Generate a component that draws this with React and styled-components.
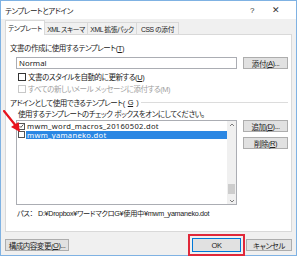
import styled, { createGlobalStyle } from "styled-components";

const GlobalStyle = createGlobalStyle`
  html, body {
    margin: 0;
    padding: 0;
    background: #ffffff;
  }
  * {
    box-sizing: border-box;
  }
`;

const Window = styled.div`
  width: 297px;
  height: 256px;
  border: 1px solid #7fb2e3;
  background: #f0f0f0;
  display: flex;
  flex-direction: column;
  position: relative;
  font-family: "Liberation Sans", "Noto Sans CJK JP", sans-serif;
  font-feature-settings: "palt";
  font-size: 7.5px;
  letter-spacing: -0.45px;
  color: #1a1a1a;
`;

// Latin runs in the list are set wider, like the list box font
const En = styled.span`
  font-family: "Noto Sans", sans-serif;
  font-size: ${(p) => p.size || 7.8}px;
  letter-spacing: ${(p) => p.spacing || 0}px;
`;

const TitleBar = styled.div`
  height: 18px;
  background: #ffffff;
  display: flex;
  align-items: center;
  padding: 0 8px 0 4px;
  span {
    flex: 1;
  }
`;

const TitleButton = styled.div`
  width: 24px;
  text-align: center;
  font-size: ${(p) => p.size || 8}px;
  color: #333;
`;

const Body = styled.div`
  flex: 1;
  padding: 1px 4px 0 4px;
  display: flex;
  flex-direction: column;
`;

const TabStrip = styled.div`
  display: flex;
  align-items: flex-end;
  height: 15px;
  margin-bottom: -1px;
`;

const Tab = styled.div`
  width: ${(p) => p.w}px;
  height: ${(p) => (p.active ? 15 : 13)}px;
  background: ${(p) => (p.active ? "#ffffff" : "#f0f0f0")};
  border: 1px solid #d9d9d9;
  border-bottom: ${(p) => (p.active ? "none" : "1px solid #d9d9d9")};
  margin-left: ${(p) => (p.active ? 0 : -1)}px;
  display: flex;
  align-items: center;
  justify-content: center;
  font-size: 6.8px;
  letter-spacing: -0.4px;
  white-space: nowrap;
  position: relative;
  z-index: ${(p) => (p.active ? 2 : 1)};
`;

const Panel = styled.div`
  height: 198px;
  background: #ffffff;
  border: 1px solid #d9d9d9;
  padding: 9px 3px 0 4px;
  display: flex;
  flex-direction: column;
`;

const Label = styled.div`
  height: 9px;
  line-height: 9px;
  padding-left: ${(p) => p.indent || 0}px;
  margin-top: ${(p) => p.top || 0}px;
  white-space: nowrap;
`;

const Row = styled.div`
  display: flex;
  align-items: flex-start;
  gap: 6px;
  padding-left: 6px;
  margin-top: ${(p) => p.top || 0}px;
`;

const TextBox = styled.div`
  width: 223px;
  height: 12px;
  border: 1px solid #abadb3;
  padding-left: 2px;
  line-height: 10px;
  background: #fff;
`;

const Button = styled.div`
  width: ${(p) => p.w || 45}px;
  height: ${(p) => p.h || 12}px;
  background: #e1e1e1;
  border: 1px solid ${(p) => (p.primary ? "#0078d7" : "#adadad")};
  display: flex;
  align-items: center;
  justify-content: center;
  color: #222;
  white-space: nowrap;
  margin-left: ${(p) => p.left || 0}px;
`;

const CheckRow = styled.div`
  display: flex;
  align-items: center;
  gap: 2px;
  height: 9px;
  padding-left: 8px;
  margin-top: ${(p) => p.top || 0}px;
  color: ${(p) => (p.disabled ? "#a0a0a0" : "inherit")};
  white-space: nowrap;
`;

const Box = styled.div`
  width: 8px;
  height: 8px;
  border: 1px solid ${(p) => (p.disabled ? "#c8c8c8" : "#333")};
  background: #fff;
  flex: none;
  display: flex;
  align-items: center;
  justify-content: center;
`;

const GroupHead = styled.div`
  display: flex;
  align-items: center;
  gap: 3px;
  height: 9px;
  margin-top: 5px;
  white-space: nowrap;
  &::after {
    content: "";
    flex: 1;
    border-top: 1px solid #dcdcdc;
  }
`;

const ListRow = styled.div`
  display: flex;
  gap: 6px;
  padding-left: 6px;
  margin-top: 1px;
`;

const ListBox = styled.div`
  width: 223px;
  height: 85px;
  border: 1px solid #abadb3;
  display: flex;
  background: #fff;
`;

const Items = styled.div`
  flex: 1;
  padding-top: 1px;
`;

const Item = styled.div`
  height: 8.5px;
  display: flex;
  align-items: center;
  gap: 1px;
  padding-left: 1px;
  white-space: nowrap;
`;

const ItemText = styled(En)`
  display: block;
  flex: 1;
  height: 8.5px;
  line-height: 8.5px;
  padding-left: 1px;
  background: ${(p) => (p.selected ? "#2b87e3" : "transparent")};
  color: ${(p) => (p.selected ? "#fff" : "inherit")};
`;

const ItemBox = styled(Box)`
  width: 7px;
  height: 7px;
  border-color: #555;
`;

const Scrollbar = styled.div`
  width: 9px;
  background: #f0f0f0;
  display: flex;
  flex-direction: column;
  align-items: center;
  padding: 2px 0 1px;
`;

const Thumb = styled.div`
  width: 7px;
  height: 10px;
  background: #cdcdcd;
  margin-top: auto;
  margin-bottom: 5px;
`;

const Arrow = styled.svg`
  width: 6px;
  height: 4px;
  flex: none;
`;

const SideButtons = styled.div`
  display: flex;
  flex-direction: column;
  gap: 5px;
`;

const PathLine = styled.div`
  margin-top: 4px;
  padding-left: 7px;
  white-space: nowrap;
  height: 9px;
  line-height: 9px;
  font-size: 7.2px;
  letter-spacing: -0.3px;
`;

const Footer = styled.div`
  flex: 1;
  display: flex;
  align-items: center;
  padding: 3px 0 0 0;
`;

const OkWrap = styled.div`
  margin-left: auto;
  outline: 2px solid #e0283a;
  outline-offset: 2px;
`;

const Pointer = styled.svg`
  position: absolute;
  left: 2px;
  top: 109px;
  width: 22px;
  height: 26px;
`;

const Check = () => (
  <svg width="6" height="6" viewBox="0 0 6 6">
    <path d="M0.8 3.2 L2.3 4.7 L5.2 1.2" stroke="#222" strokeWidth="0.9" fill="none" />
  </svg>
);

export default function App() {
  return (
    <>
      <GlobalStyle />
      <Window>
        <TitleBar>
          <span>テンプレートとアドイン</span>
          <TitleButton>?</TitleButton>
          <TitleButton size={9}>✕</TitleButton>
        </TitleBar>
        <Body>
          <TabStrip>
            <Tab active w={40}>テンプレート</Tab>
            <Tab w={44}>XML スキーマ</Tab>
            <Tab w={50}>XML 拡張パック</Tab>
            <Tab w={43}>CSS の添付</Tab>
          </TabStrip>
          <Panel>
            <Label>文書の作成に使用するテンプレート(<u>T</u>)</Label>
            <Row top={4}>
              <TextBox>
                <En>Normal</En>
              </TextBox>
              <Button>添付(<u>A</u>)...</Button>
            </Row>
            <CheckRow top={3}>
              <Box />
              <span>文書のスタイルを自動的に更新する(<u>U</u>)</span>
            </CheckRow>
            <CheckRow top={3} disabled>
              <Box disabled />
              <span>すべての新しいメール メッセージに添付する(M)</span>
            </CheckRow>
            <GroupHead>アドインとして使用できるテンプレート(<u>G</u>)</GroupHead>
            <Label indent={8} top={3}>
              使用するテンプレートのチェック ボックスをオンにしてください。
            </Label>
            <ListRow>
              <ListBox>
                <Items>
                  <Item>
                    <ItemBox>
                      <Check />
                    </ItemBox>
                    <ItemText size={7.6} spacing={0.3}>mwm_word_macros_20160502.dot</ItemText>
                  </Item>
                  <Item>
                    <ItemBox />
                    <ItemText size={7.6} spacing={0.3} selected>mwm_yamaneko.dot</ItemText>
                  </Item>
                </Items>
                <Scrollbar>
                  <Arrow viewBox="0 0 6 4">
                    <path d="M1 3 L3 1 L5 3" stroke="#606060" strokeWidth="0.8" fill="none" />
                  </Arrow>
                  <Thumb />
                  <Arrow viewBox="0 0 6 4">
                    <path d="M1 1 L3 3 L5 1" stroke="#606060" strokeWidth="0.8" fill="none" />
                  </Arrow>
                </Scrollbar>
              </ListBox>
              <SideButtons>
                <Button>追加(<u>D</u>)...</Button>
                <Button>削除(<u>R</u>)</Button>
              </SideButtons>
            </ListRow>
            <PathLine>パス：&nbsp;&nbsp; D:¥Dropbox¥ワードマクロG¥使用中¥mwm_yamaneko.dot</PathLine>
          </Panel>
          <Footer>
            <Button w={64}>構成内容変更(<u>O</u>)...</Button>
            <OkWrap>
              <Button primary w={49} h={14}>OK</Button>
            </OkWrap>
            <Button w={46} left={5}>キャンセル</Button>
          </Footer>
        </Body>
        <Pointer viewBox="0 0 22 26">
          <path d="M1 1 L13 16" stroke="#e8141e" strokeWidth="2.2" strokeLinecap="round" />
          <path d="M8 17 L17 22 L15.5 12 Z" fill="#e8141e" />
        </Pointer>
      </Window>
    </>
  );
}
